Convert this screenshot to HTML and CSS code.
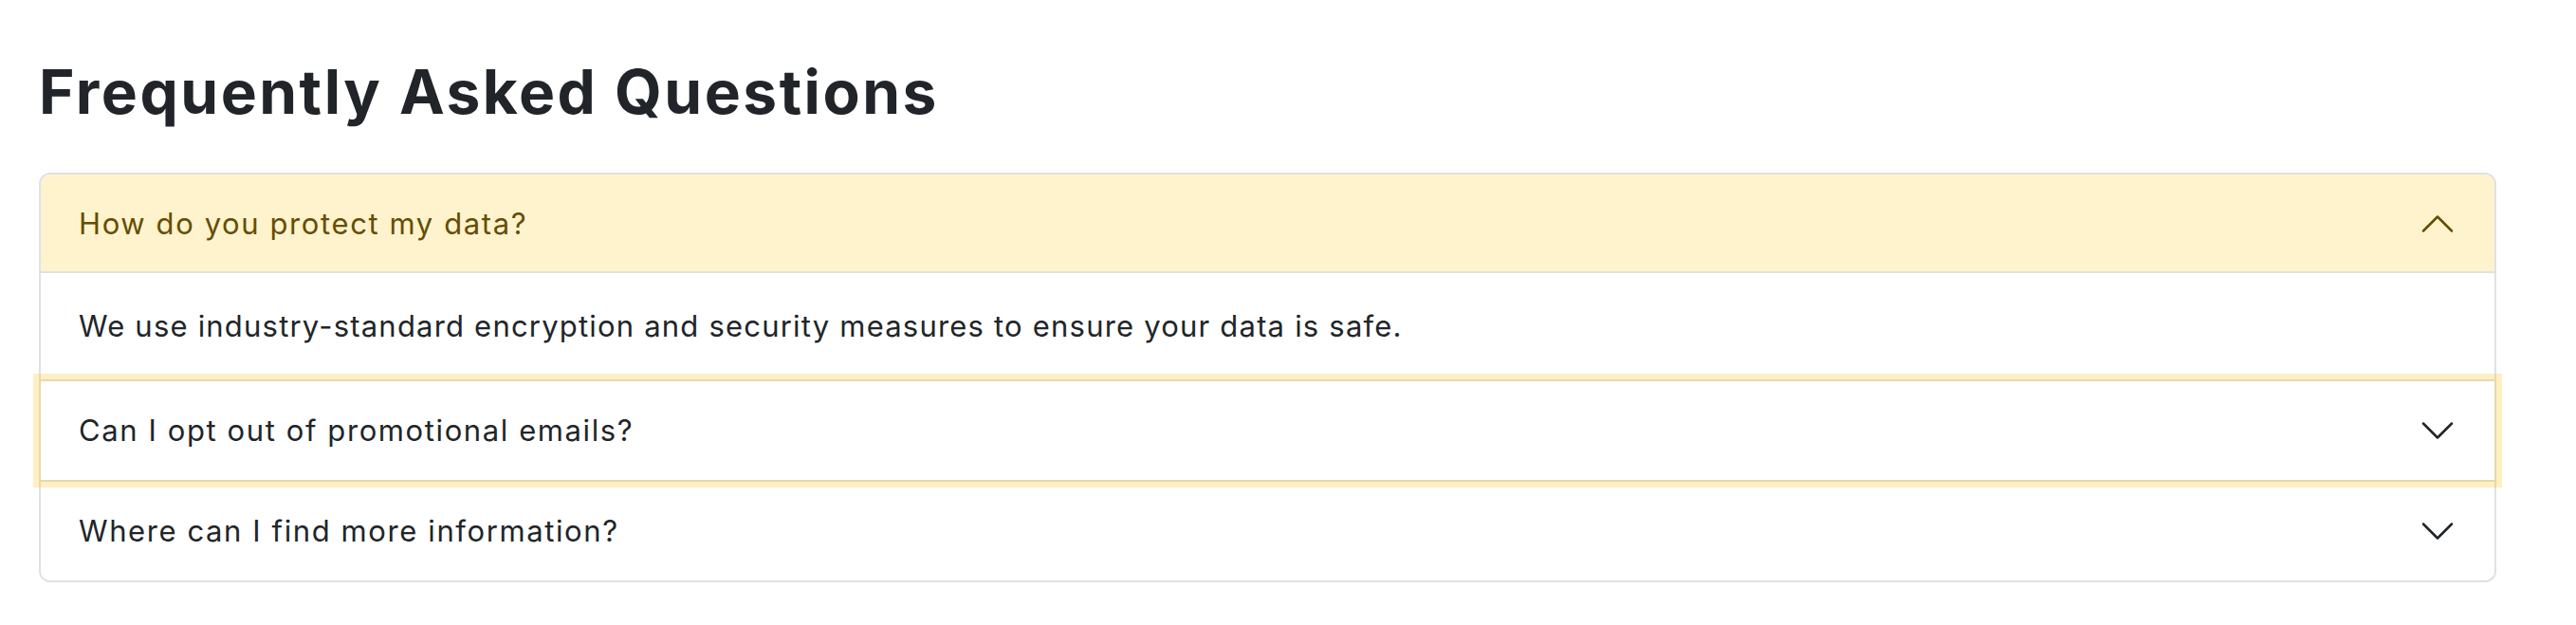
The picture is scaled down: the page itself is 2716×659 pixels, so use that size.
FILE: index.html
```html
<!DOCTYPE html>
<html lang="en">
<head>
<meta charset="utf-8">
<title>FAQ</title>
<link rel="stylesheet" href="styles.css">
</head>
<body>
<main class="page">
  <h2 class="title">Frequently Asked Questions</h2>
  <div class="accordion">
    <div class="item">
      <button class="question open" type="button">
        <span class="q-text">How do you protect my data?</span>
        <svg class="chev" viewBox="0 0 16 16" fill="none" stroke="currentColor" stroke-linecap="round" stroke-linejoin="round"><path d="M2 5L8 11L14 5"/></svg>
      </button>
      <div class="answer">We use industry-standard encryption and security measures to ensure your data is safe.</div>
    </div>
    <div class="item">
      <button class="question focused" type="button">
        <span class="q-text">Can I opt out of promotional emails?</span>
        <svg class="chev" viewBox="0 0 16 16" fill="none" stroke="currentColor" stroke-linecap="round" stroke-linejoin="round"><path d="M2 5L8 11L14 5"/></svg>
      </button>
    </div>
    <div class="item">
      <button class="question" type="button">
        <span class="q-text">Where can I find more information?</span>
        <svg class="chev" viewBox="0 0 16 16" fill="none" stroke="currentColor" stroke-linecap="round" stroke-linejoin="round"><path d="M2 5L8 11L14 5"/></svg>
      </button>
    </div>
  </div>
</main>
</body>
</html>
```
FILE: styles.css
```css
html, body {
  margin: 0;
  padding: 0;
  background: #ffffff;
}

body {
  font-family: Inter, "Noto Sans", "Liberation Sans", sans-serif;
  color: #212529;
}

.page {
  padding: 58px 84px 40px 41px;
}

.title {
  margin: 0 0 47px 0;
  font-size: 64px;
  line-height: 77px;
  font-weight: 700;
  letter-spacing: 2.5px;
  color: #212529;
}

.accordion {
  display: flex;
  flex-direction: column;
}

.item {
  border: 2px solid #dee2e6;
  background: #ffffff;
}

.item + .item {
  border-top: 0;
}

.item:first-child {
  border-top-left-radius: 12px;
  border-top-right-radius: 12px;
}

.item:last-child {
  border-bottom-left-radius: 12px;
  border-bottom-right-radius: 12px;
}

.question {
  position: relative;
  display: flex;
  align-items: center;
  width: 100%;
  box-sizing: border-box;
  height: 104px;
  margin: 0;
  padding: 28px 40px;
  border: 0;
  background: #ffffff;
  font-family: inherit;
  font-size: 31px;
  line-height: 48px;
  font-weight: 400;
  letter-spacing: 1.6px;
  color: #212529;
  text-align: left;
  border-radius: 0;
}

.item:first-child .question {
  border-top-left-radius: 10px;
  border-top-right-radius: 10px;
}

.item:last-child .question {
  border-bottom-left-radius: 10px;
  border-bottom-right-radius: 10px;
}

.question.open {
  background: #fff3cd;
  color: #664d03;
  box-shadow: inset 0 -2px 0 #dee2e6;
}

.question.focused {
  z-index: 3;
  box-shadow: 0 0 0 8px rgba(255, 193, 7, 0.25);
}

.q-text {
  flex: 1 1 auto;
}

.chev {
  flex: 0 0 40px;
  width: 40px;
  height: 40px;
  margin-left: auto;
  stroke-width: 1;
}

.question.open .chev {
  transform: rotate(180deg);
}

.answer {
  padding: 32px 40px;
  font-size: 31px;
  line-height: 48px;
  letter-spacing: 1.2px;
  color: #212529;
}
```
